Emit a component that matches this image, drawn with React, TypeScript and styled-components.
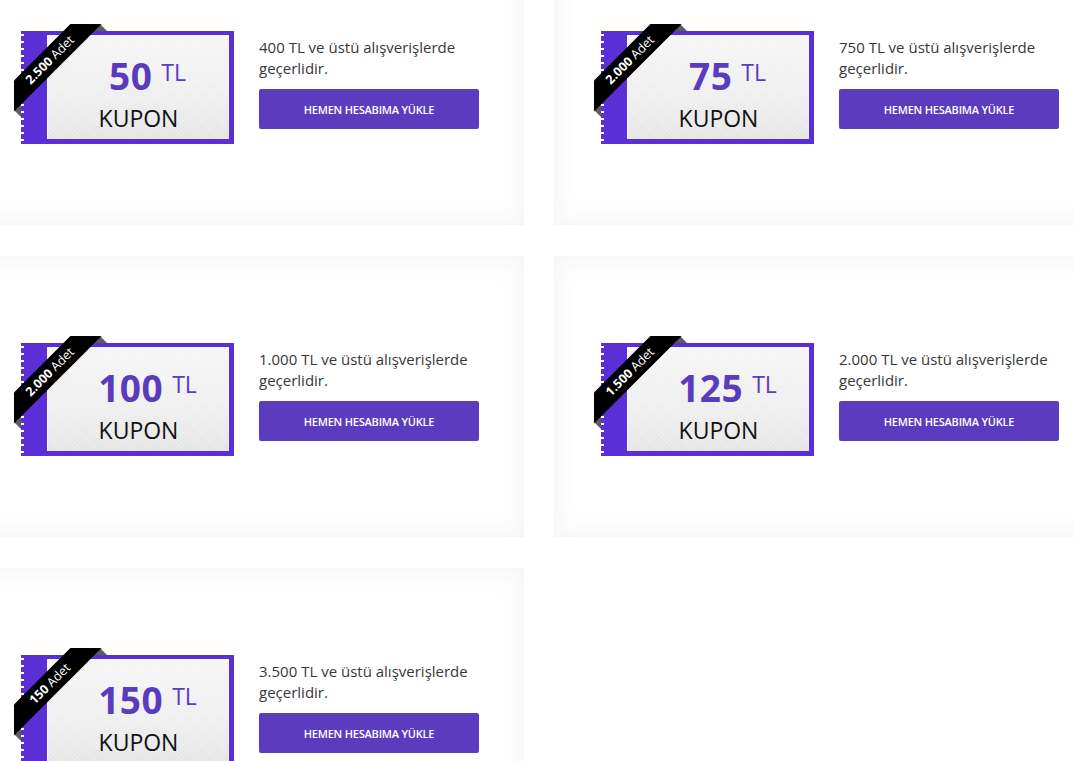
import React from "react";
import styled, { createGlobalStyle } from "styled-components";

const GlobalStyle = createGlobalStyle`
  html, body { margin: 0; padding: 0; background: #ffffff; }
  body { font-family: "Open Sans", "Liberation Sans", sans-serif; overflow: hidden; }
  * { box-sizing: border-box; }
`;

const Page = styled.div`
  width: 1074px;
  height: 761px;
  overflow: hidden;
  background: #ffffff;
`;

const Grid = styled.div`
  display: grid;
  grid-template-columns: 550px 550px;
  grid-auto-rows: 281px;
  column-gap: 30px;
  row-gap: 31px;
  margin: -56px 0 0 -26px;
`;

const Card = styled.div`
  display: flex;
  align-items: flex-start;
  gap: 25px;
  padding: 87px 0 0 47px;
  background: #ffffff;
  box-shadow: inset 0 0 28px rgba(0, 0, 0, 0.055);
`;

const Ticket = styled.div`
  position: relative;
  flex: none;
  width: 213px;
  height: 113px;
  padding: 4px 5px 5px 26px;
  background: #5a30d6;
`;

const Perforation = styled.div`
  position: absolute;
  left: 0;
  top: 3px;
  bottom: 3px;
  width: 3px;
  background: repeating-linear-gradient(
    to bottom,
    #ffffff 0 2px,
    transparent 2px 7px
  );
`;

const Panel = styled.div`
  height: 100%;
  display: flex;
  flex-direction: column;
  align-items: center;
  border-left: 1px solid #fafafa;
  background:
    repeating-linear-gradient(45deg, rgba(255,255,255,0.25) 0 1px, transparent 1px 3px),
    linear-gradient(to bottom, #f6f6f6 0%, #efefef 55%, #e5e5e5 100%);
`;

const AmountRow = styled.div`
  display: flex;
  align-items: flex-start;
  padding: 21px 0 0 18px;
  height: 70px;
  color: #5a3bc0;
`;

const Amount = styled.span`
  font-size: 37px;
  font-weight: 700;
  line-height: 40px;
  letter-spacing: 0.5px;
`;

const Currency = styled.span`
  margin: 4px 0 0 9px;
  font-size: 23px;
  font-weight: 400;
  line-height: 24px;
`;

const Label = styled.div`
  font-size: 23px;
  line-height: 26px;
  color: #111111;
`;

const Ribbon = styled.div`
  position: absolute;
  top: -7px;
  left: -7px;
  width: 100px;
  height: 100px;
  overflow: hidden;
  z-index: 2;

  &::before,
  &::after {
    content: "";
    position: absolute;
    background: #5c5c5c;
  }
  &::before {
    top: 0;
    left: 79px;
    width: 14px;
    height: 7px;
    clip-path: polygon(50% 0, 100% 100%, 0 100%);
  }
  &::after {
    left: 0;
    top: 79px;
    width: 7px;
    height: 14px;
    clip-path: polygon(0 50%, 100% 0, 100% 100%);
  }
`;

const Band = styled.div`
  position: absolute;
  left: -44px;
  top: 25px;
  width: 160px;
  height: 22px;
  line-height: 22px;
  background: #000000;
  color: #ffffff;
  font-size: 12.5px;
  text-align: center;
  white-space: nowrap;
  transform: rotate(-45deg);
  z-index: 1;

  b { font-weight: 700; }
`;

const Info = styled.div`
  width: 220px;
  padding-top: 6px;
  display: flex;
  flex-direction: column;
  gap: 10px;
`;

const Description = styled.p`
  margin: 0;
  font-size: 15px;
  line-height: 21px;
  color: #383838;
`;

const LoadButton = styled.button`
  width: 220px;
  height: 40px;
  border: 0;
  border-radius: 2px;
  background: #5b3cbe;
  color: #ffffff;
  font-family: "Open Sans", "Liberation Sans", sans-serif;
  font-size: 11px;
  font-weight: 600;
  letter-spacing: -0.2px;
  cursor: pointer;
`;

type Coupon = { amount: string; count: string; min: string };

const coupons: Coupon[] = [
  { amount: "50", count: "2.500", min: "400" },
  { amount: "75", count: "2.000", min: "750" },
  { amount: "100", count: "2.000", min: "1.000" },
  { amount: "125", count: "1.500", min: "2.000" },
  { amount: "150", count: "150", min: "3.500" },
];

const CouponCard: React.FC<{ c: Coupon }> = ({ c }) => (
  <Card>
    <Ticket>
      <Perforation />
      <Ribbon>
        <Band>
          <b>{c.count}</b> Adet
        </Band>
      </Ribbon>
      <Panel>
        <AmountRow>
          <Amount>{c.amount}</Amount>
          <Currency>TL</Currency>
        </AmountRow>
        <Label>KUPON</Label>
      </Panel>
    </Ticket>
    <Info>
      <Description>{c.min} TL ve üstü alışverişlerde geçerlidir.</Description>
      <LoadButton>HEMEN HESABIMA YÜKLE</LoadButton>
    </Info>
  </Card>
);

export default function App() {
  return (
    <Page>
      <GlobalStyle />
      <Grid>
        {coupons.map((c) => (
          <CouponCard key={c.amount} c={c} />
        ))}
      </Grid>
    </Page>
  );
}
